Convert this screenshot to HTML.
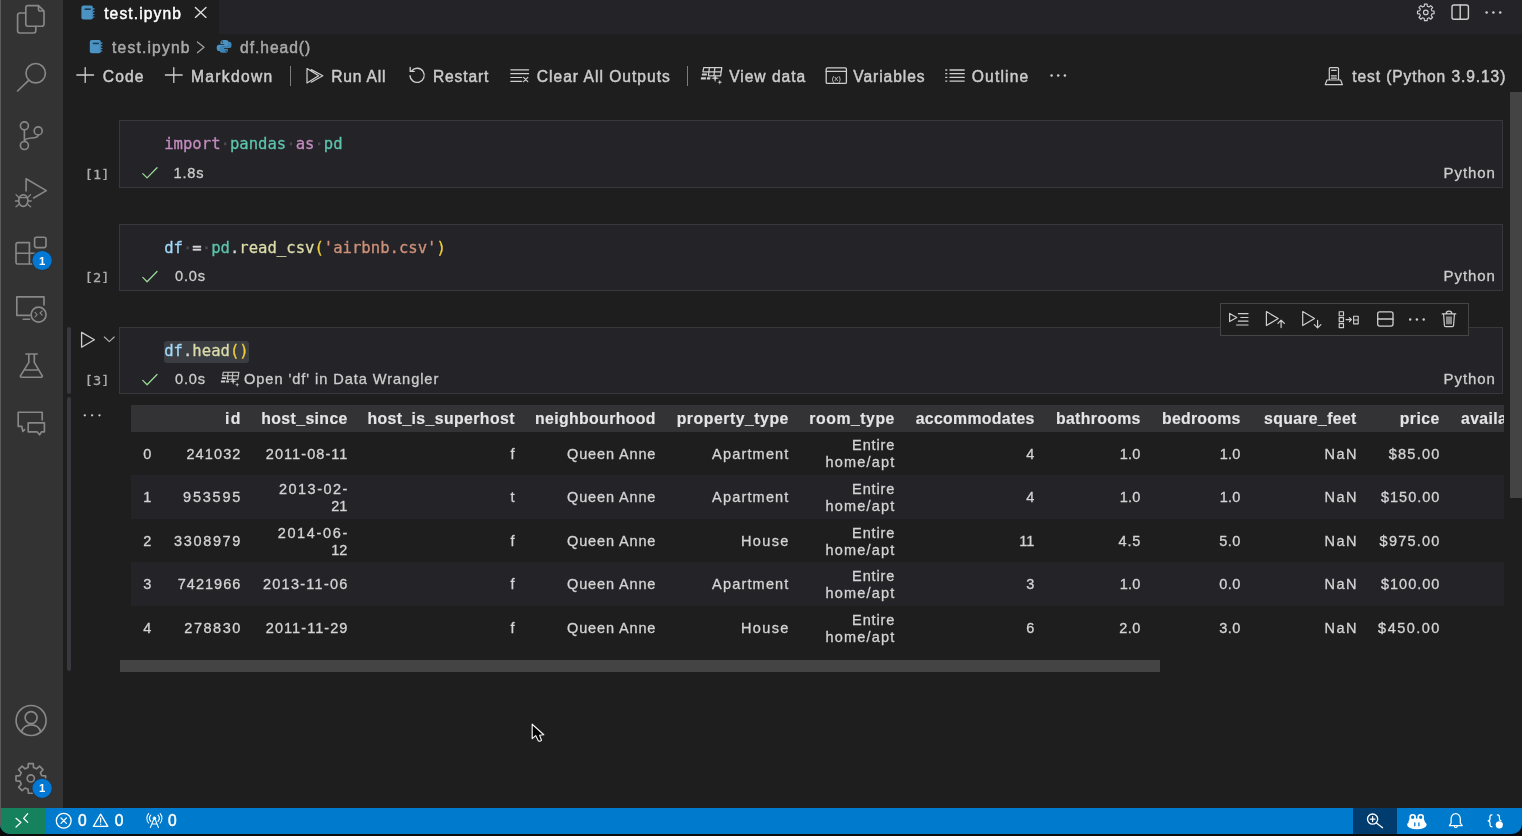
<!DOCTYPE html>
<html lang="en">
<head>
<meta charset="utf-8">
<title>test.ipynb</title>
<style>
*{box-sizing:border-box;margin:0;padding:0}
html,body{width:1522px;height:836px;overflow:hidden;background:#1e1e1e}
body{position:relative;font-family:"Liberation Sans",sans-serif;font-size:15.6px;color:#ccc;letter-spacing:.8px;-webkit-text-stroke:.45px currentColor}
.abs{position:absolute}
.t{position:absolute;white-space:pre;line-height:20px;height:20px}
.s{font-size:14.6px;-webkit-text-stroke:.3px currentColor}
svg{position:absolute;overflow:visible}
svg text{-webkit-text-stroke:0}
/* chrome */
#activity{left:0;top:0;width:63px;height:808px;background:#333}
#leftedge{left:0;top:0;width:1px;height:826px;background:#5c5c5c}
#tabs{left:63px;top:0;width:1459px;height:34px;background:#232328}
#tab1{left:63px;top:0;width:156px;height:34px;background:#1e1e1e}
#bottom{left:0;top:808px;width:1522px;height:28px;background:#0c0c0c}
#status{left:0;top:808px;width:1522px;height:26px;background:#007acc;border-radius:0 0 10px 10px}
#remote{left:0;top:808px;width:46px;height:26px;background:#16825d;border-radius:0 0 0 10px}
#zoomitem{left:1353px;top:808px;width:44px;height:26px;background:#003c6e}
/* cells */
.cell{position:absolute;left:119px;width:1384px;height:67px;background:#232328;border:1px solid #37373c}
.code{position:absolute;left:164.2px;font-family:"DejaVu Sans Mono","Liberation Mono",monospace;font-size:15.6px;letter-spacing:0;white-space:pre;line-height:22px;height:22px;-webkit-text-stroke:.3px currentColor}
.ws{color:#4b4b50}
.exec{font-family:"DejaVu Sans Mono","Liberation Mono",monospace;font-size:13.6px;letter-spacing:0;color:#acacac;-webkit-text-stroke:.3px currentColor;transform:scaleY(.84);transform-origin:50% 48%}
/* table */
#out{left:131px;top:405px;width:1373px;height:246px;overflow:hidden}
table{border-collapse:collapse;table-layout:fixed;width:1460.5px;font-size:14.5px;letter-spacing:0;color:#d4d4d4;-webkit-text-stroke:.3px currentColor}
th,td{text-align:right;padding:2.2px 8.6px 0 0;line-height:17px;vertical-align:middle;white-space:nowrap;overflow:visible}
th{font-weight:700;font-size:15.8px;height:26.7px;padding-top:1.2px;color:#e4e4e4;-webkit-text-stroke:.15px currentColor}
td{height:43.5px}
tbody tr:nth-child(1) td{height:43.2px}tbody tr:nth-child(2) td{height:44.3px}tbody tr:nth-child(3) td{height:42.6px}tbody tr:nth-child(4) td{height:44px}
tbody tr:nth-child(1) td.m{padding-bottom:1.4px}tbody tr:nth-child(2) td:not(.m){padding-top:.2px}
thead tr{background:#333336}
tbody tr:nth-child(even){background:#232328}
</style>
</head>
<body>
<div id="L" style="position:absolute;left:0;top:0;width:1522px;height:836px;will-change:transform">
<div class="abs" id="bottom"></div>
<div class="abs" id="activity"></div>
<div class="abs" id="tabs"></div>
<div class="abs" id="tab1"></div>
<div class="abs" id="status"></div>
<div class="abs" id="remote"></div>
<div class="abs" id="zoomitem"></div>
<div class="abs" id="leftedge"></div>

<!-- TAB -->
<div class="t" id="x_tab" style="left:104.2px;letter-spacing:1.1px;top:4px;color:#fff">test.ipynb</div>
<!-- BREADCRUMB -->
<div class="t" id="x_bc1" style="left:112.1px;letter-spacing:1.18px;top:38px;color:#aaa">test.ipynb</div>
<div class="t" id="x_bc2" style="left:240px;letter-spacing:.97px;top:38px;color:#aaa">df.head()</div>
<!-- TOOLBAR -->
<div class="t" id="x_code" style="left:102.8px;letter-spacing:1.1px;top:67px">Code</div>
<div class="t" id="x_md" style="left:191px;letter-spacing:1.32px;top:67px">Markdown</div>
<div class="t" id="x_run" style="left:331.2px;letter-spacing:0.82px;top:67px">Run All</div>
<div class="t" id="x_rst" style="left:432.9px;letter-spacing:0.88px;top:67px">Restart</div>
<div class="t" id="x_clr" style="left:536.8px;letter-spacing:1.0px;top:67px">Clear All Outputs</div>
<div class="t" id="x_vd" style="left:729.2px;letter-spacing:0.97px;top:67px">View data</div>
<div class="t" id="x_var" style="left:853.2px;letter-spacing:0.95px;top:67px">Variables</div>
<div class="t" id="x_out" style="left:971.8px;letter-spacing:1.17px;top:67px">Outline</div>
<div class="t" id="x_krn" style="left:1352.2px;letter-spacing:0.9px;top:67px">test (Python 3.9.13)</div>
<div class="abs" style="left:289.6px;top:66px;width:1.2px;height:20px;background:#7c7c7c"></div>
<div class="abs" style="left:687.2px;top:66px;width:1.2px;height:20px;background:#7c7c7c"></div>
<!-- CELLS -->
<div class="cell" style="top:120px;height:68px"></div>
<div class="cell" style="top:224px"></div>
<div class="cell" style="top:327px"></div>

<div class="code" style="top:132.8px"><span style="color:#c38cbe">import</span><span class="ws">·</span><span style="color:#5cc4ac">pandas</span><span class="ws">·</span><span style="color:#c38cbe">as</span><span class="ws">·</span><span style="color:#5cc4ac">pd</span></div>
<div class="code" style="top:237px"><span style="color:#a2d9f8">df</span><span class="ws">·</span><span style="color:#d4d4d4">=</span><span class="ws">·</span><span style="color:#5cc4ac">pd</span><span style="color:#d4d4d4">.</span><span style="color:#dcdcaa">read_csv</span><span style="color:#efce3a">(</span><span style="color:#ce9178">'airbnb.csv'</span><span style="color:#efce3a">)</span></div>
<div class="abs" style="left:164px;top:341px;width:84.5px;height:22px;background:#3a3d41;border-radius:3px"></div>
<div class="code" style="top:340px"><span style="color:#a2d9f8">df</span><span style="color:#d4d4d4">.</span><span style="color:#dcdcaa">head</span><span style="color:#efce3a">()</span></div>

<div class="t exec" style="left:84.8px;top:165px">[1]</div>
<div class="t exec" style="left:84.8px;top:268px">[2]</div>
<div class="t exec" style="left:84.8px;top:371px">[3]</div>

<div class="t s" id="x_t1" style="left:173.5px;top:163px">1.8s</div>
<div class="t s" id="x_t2" style="left:175px;top:266px">0.0s</div>
<div class="t s" id="x_t3" style="left:175px;top:369px">0.0s</div>
<div class="t s" id="x_dw" style="left:244px;letter-spacing:.94px;top:369px">Open 'df' in Data Wrangler</div>
<div class="t s" id="x_py1" style="left:1443.5px;font-size:15px;letter-spacing:.95px;top:163px">Python</div>
<div class="t s" id="x_py2" style="left:1443.5px;font-size:15px;letter-spacing:.95px;top:266px">Python</div>
<div class="t s" id="x_py3" style="left:1443.5px;font-size:15px;letter-spacing:.95px;top:369px">Python</div>

<!-- focus bars -->
<div class="abs" style="left:67px;top:327px;width:3.8px;height:67px;background:#38383e;border-radius:2px"></div>
<div class="abs" style="left:67px;top:397px;width:3.8px;height:274px;background:#38383e;border-radius:2px"></div>
<!-- cell toolbar -->
<div class="abs" style="left:1220px;top:303px;width:249px;height:32.5px;background:#1e1e1e;border:1px solid #454545"></div>
<!-- OUTPUT TABLE -->
<div class="abs" id="out">
<table>
<colgroup><col style="width:29px"><col style="width:89px"><col style="width:107px"><col style="width:167px"><col style="width:141px"><col style="width:133px"><col style="width:106px"><col style="width:140px"><col style="width:106px"><col style="width:100px"><col style="width:116px"><col style="width:83px"><col style="width:143.5px"></colgroup>
<thead><tr><th></th><th><span style="letter-spacing:1.3px;margin-right:-1.30px">id</span></th><th><span style="letter-spacing:0.4px;margin-right:-0.40px">host_since</span></th><th><span style="letter-spacing:0.41px;margin-right:-0.41px">host_is_superhost</span></th><th><span style="letter-spacing:0.38px;margin-right:-0.38px">neighbourhood</span></th><th><span style="letter-spacing:0.53px;margin-right:-0.53px">property_type</span></th><th><span style="letter-spacing:0.54px;margin-right:-0.54px">room_type</span></th><th><span style="letter-spacing:0.33px;margin-right:-0.33px">accommodates</span></th><th><span style="letter-spacing:0.36px;margin-right:-0.36px">bathrooms</span></th><th><span style="letter-spacing:0.3px;margin-right:-0.30px">bedrooms</span></th><th><span style="letter-spacing:0.37px;margin-right:-0.37px">square_feet</span></th><th><span style="letter-spacing:0.48px;margin-right:-0.48px">price</span></th><th><span style="letter-spacing:0.4px;margin-right:-0.40px">availability_365</span></th></tr></thead>
<tbody>
<tr><td><span style="letter-spacing:0px;margin-right:0.00px">0</span></td><td><span style="letter-spacing:1.12px;margin-right:-1.12px">241032</span></td><td><span style="letter-spacing:1.06px;margin-right:-1.06px">2011-08-11</span></td><td><span style="letter-spacing:0px;margin-right:0.00px">f</span></td><td><span style="letter-spacing:0.86px;margin-right:-0.86px">Queen Anne</span></td><td><span style="letter-spacing:1.18px;margin-right:-1.18px">Apartment</span></td><td class="m"><span style="letter-spacing:0.88px;margin-right:-0.88px">Entire</span><br><span style="letter-spacing:1.21px;margin-right:-1.21px">home/apt</span></td><td><span style="letter-spacing:0px;margin-right:0.00px">4</span></td><td><span style="letter-spacing:0.3px;margin-right:-0.30px">1.0</span></td><td><span style="letter-spacing:0.3px;margin-right:-0.30px">1.0</span></td><td><span style="letter-spacing:1.43px;margin-right:-1.43px">NaN</span></td><td><span style="letter-spacing:1.28px;margin-right:-1.28px">$85.00</span></td><td></td></tr>
<tr><td><span style="letter-spacing:0px;margin-right:0.00px">1</span></td><td><span style="letter-spacing:1.8px;margin-right:-1.80px">953595</span></td><td class="m"><span style="letter-spacing:1.48px;margin-right:-1.48px">2013-02-</span><br><span style="letter-spacing:0px;margin-right:0.00px">21</span></td><td><span style="letter-spacing:0px;margin-right:0.00px">t</span></td><td><span style="letter-spacing:0.86px;margin-right:-0.86px">Queen Anne</span></td><td><span style="letter-spacing:1.18px;margin-right:-1.18px">Apartment</span></td><td class="m"><span style="letter-spacing:0.88px;margin-right:-0.88px">Entire</span><br><span style="letter-spacing:1.21px;margin-right:-1.21px">home/apt</span></td><td><span style="letter-spacing:0px;margin-right:0.00px">4</span></td><td><span style="letter-spacing:0.3px;margin-right:-0.30px">1.0</span></td><td><span style="letter-spacing:0.3px;margin-right:-0.30px">1.0</span></td><td><span style="letter-spacing:1.43px;margin-right:-1.43px">NaN</span></td><td><span style="letter-spacing:1.01px;margin-right:-1.01px">$150.00</span></td><td></td></tr>
<tr><td><span style="letter-spacing:0px;margin-right:0.00px">2</span></td><td><span style="letter-spacing:1.64px;margin-right:-1.64px">3308979</span></td><td class="m"><span style="letter-spacing:1.67px;margin-right:-1.67px">2014-06-</span><br><span style="letter-spacing:0px;margin-right:0.00px">12</span></td><td><span style="letter-spacing:0px;margin-right:0.00px">f</span></td><td><span style="letter-spacing:0.86px;margin-right:-0.86px">Queen Anne</span></td><td><span style="letter-spacing:1.39px;margin-right:-1.39px">House</span></td><td class="m"><span style="letter-spacing:0.88px;margin-right:-0.88px">Entire</span><br><span style="letter-spacing:1.21px;margin-right:-1.21px">home/apt</span></td><td><span style="letter-spacing:0px;margin-right:0.00px">11</span></td><td><span style="letter-spacing:0.85px;margin-right:-0.85px">4.5</span></td><td><span style="letter-spacing:0.55px;margin-right:-0.55px">5.0</span></td><td><span style="letter-spacing:1.43px;margin-right:-1.43px">NaN</span></td><td><span style="letter-spacing:1.23px;margin-right:-1.23px">$975.00</span></td><td></td></tr>
<tr><td><span style="letter-spacing:0px;margin-right:0.00px">3</span></td><td><span style="letter-spacing:1.04px;margin-right:-1.04px">7421966</span></td><td><span style="letter-spacing:1.26px;margin-right:-1.26px">2013-11-06</span></td><td><span style="letter-spacing:0px;margin-right:0.00px">f</span></td><td><span style="letter-spacing:0.86px;margin-right:-0.86px">Queen Anne</span></td><td><span style="letter-spacing:1.18px;margin-right:-1.18px">Apartment</span></td><td class="m"><span style="letter-spacing:0.88px;margin-right:-0.88px">Entire</span><br><span style="letter-spacing:1.21px;margin-right:-1.21px">home/apt</span></td><td><span style="letter-spacing:0px;margin-right:0.00px">3</span></td><td><span style="letter-spacing:0.3px;margin-right:-0.30px">1.0</span></td><td><span style="letter-spacing:0.55px;margin-right:-0.55px">0.0</span></td><td><span style="letter-spacing:1.43px;margin-right:-1.43px">NaN</span></td><td><span style="letter-spacing:1.01px;margin-right:-1.01px">$100.00</span></td><td></td></tr>
<tr><td><span style="letter-spacing:0px;margin-right:0.00px">4</span></td><td><span style="letter-spacing:1.54px;margin-right:-1.54px">278830</span></td><td><span style="letter-spacing:1.06px;margin-right:-1.06px">2011-11-29</span></td><td><span style="letter-spacing:0px;margin-right:0.00px">f</span></td><td><span style="letter-spacing:0.86px;margin-right:-0.86px">Queen Anne</span></td><td><span style="letter-spacing:1.39px;margin-right:-1.39px">House</span></td><td class="m"><span style="letter-spacing:0.88px;margin-right:-0.88px">Entire</span><br><span style="letter-spacing:1.21px;margin-right:-1.21px">home/apt</span></td><td><span style="letter-spacing:0px;margin-right:0.00px">6</span></td><td><span style="letter-spacing:0.55px;margin-right:-0.55px">2.0</span></td><td><span style="letter-spacing:0.55px;margin-right:-0.55px">3.0</span></td><td><span style="letter-spacing:1.43px;margin-right:-1.43px">NaN</span></td><td><span style="letter-spacing:1.48px;margin-right:-1.48px">$450.00</span></td><td></td></tr>
</tbody></table>
</div>

<!-- scrollbars -->
<div class="abs" style="left:120px;top:660px;width:1040px;height:12px;background:#444"></div>
<div class="abs" style="left:1510px;top:92px;width:12px;height:406px;background:#444"></div>

<!-- STATUS -->
<div class="t" style="left:78px;top:810.5px;color:#fff">0</div>
<div class="t" style="left:114.8px;top:810.5px;color:#fff">0</div>
<div class="t" style="left:168px;top:810.5px;color:#fff">0</div>
</div><!-- /L -->
<svg id="icons" width="1522" height="836" viewBox="0 0 1522 836" style="left:0;top:0" fill="none" stroke-linecap="round" stroke-linejoin="round">
<!-- ACTIVITY BAR -->
<g stroke="#888" stroke-width="1.65">
<!-- files -->
<path d="M38.5 5.6 H28 a2.2 2.2 0 0 0 -2.2 2.2 V24 a2.2 2.2 0 0 0 2.2 2.2 H41.8 a2.2 2.2 0 0 0 2.2 -2.2 V11 Z M38.5 5.8 V9.6 a1.4 1.4 0 0 0 1.4 1.4 H43.8"/>
<path d="M25.6 13 H19.8 a2.2 2.2 0 0 0 -2.2 2.2 V30.8 a2.2 2.2 0 0 0 2.2 2.2 H33.6 a2.2 2.2 0 0 0 2.2 -2.2 V26.4"/>
<!-- search -->
<circle cx="35.7" cy="73.2" r="9.7"/><path d="M28.9 80.2 L17.6 91"/>
<!-- source control -->
<circle cx="24.4" cy="125.8" r="4"/><circle cx="38.2" cy="130.9" r="4"/><circle cx="24.4" cy="145.5" r="4"/>
<path d="M24.4 129.8 V141.5 M38.2 134.9 C38.2 140.5 25 135.5 24.4 141.5"/>
<!-- debug -->
<path d="M26.1 191 V178.8 L46.3 190.6 L33.6 198"/>
<ellipse cx="23.3" cy="200.6" rx="4.6" ry="5.8"/>
<path d="M19 197.6 H27.6 M18.4 197 L16 194.6 M28.2 197 L30.6 194.6 M18.6 201 H15.4 M28 201 H31.2 M18.8 204.4 L16 206.8 M27.8 204.4 L30.6 206.8" stroke-width="1.3"/>
<!-- extensions -->
<rect x="34.6" y="237.2" width="11.4" height="10.4" rx="2"/>
<path d="M29.4 242.6 H18 a2 2 0 0 0 -2 2 V262 a2 2 0 0 0 2 2 H39.6 a2 2 0 0 0 2 -2 V255.2 a2 2 0 0 0 -2 -2 H16 M29.4 242.6 V264"/>
<!-- remote explorer -->
<path d="M44 305 V296.8 H16.8 V315.4 H30 M23.2 319.2 H29.6"/>
<circle cx="38.6" cy="314.6" r="7.5"/>
<path d="M35 312.4 L37.2 314.6 L35 316.8 M42.2 310.8 L40 313 L42.2 315.2" stroke-width="1.1"/>
<!-- beaker -->
<path d="M25.9 354 H37.2 M28.8 354 V362.4 L20.6 375.6 a1 1 0 0 0 .9 1.6 H41.2 a1 1 0 0 0 .9 -1.6 L34.3 362.4 V354 M24.6 370 H38.4"/>
<!-- chat -->
<path d="M42.2 420 V412.2 H18.2 V426.4 H21.8 L22.8 431.4 L24.6 429.6"/>
<path d="M28.2 422.8 H44.4 V431.8 H41.6 L39.6 434.8 L37 431.8 H28.2 Z"/>
<!-- account -->
<circle cx="31.1" cy="720.5" r="15"/><circle cx="31.1" cy="717.6" r="6"/>
<path d="M21.6 732 C23 722.4 39.2 722.4 40.6 732"/>
<!-- gear -->
<path d="M28.10 767.53 L28.34 763.60 L33.26 763.60 L33.50 767.53 L36.58 768.80 L39.52 766.20 L43.00 769.68 L40.40 772.62 L41.67 775.70 L45.60 775.94 L45.60 780.86 L41.67 781.10 L40.40 784.18 L43.00 787.12 L39.52 790.60 L36.58 788.00 L33.50 789.27 L33.26 793.20 L28.34 793.20 L28.10 789.27 L25.02 788.00 L22.08 790.60 L18.60 787.12 L21.20 784.18 L19.93 781.10 L16.00 780.86 L16.00 775.94 L19.93 775.70 L21.20 772.62 L18.60 769.68 L22.08 766.20 L25.02 768.80Z"/>
<circle cx="30.8" cy="778.4" r="3.6"/>
</g>
<!-- badges -->
<g stroke="none">
<circle cx="42.1" cy="260.5" r="10.6" fill="#2b3440"/><circle cx="42.1" cy="260.5" r="9.6" fill="#0078d4"/>
<circle cx="42.1" cy="788.3" r="10.6" fill="#2b3440"/><circle cx="42.1" cy="788.3" r="9.6" fill="#0078d4"/>
<text x="42.1" y="264.6" font-family="Liberation Sans, sans-serif" font-weight="700" font-size="11.4" fill="#fff" text-anchor="middle" letter-spacing="0">1</text>
<text x="42.1" y="792.4" font-family="Liberation Sans, sans-serif" font-weight="700" font-size="11.4" fill="#fff" text-anchor="middle" letter-spacing="0">1</text>
</g>
</svg>
<svg width="1522" height="836" viewBox="0 0 1522 836" style="left:0;top:0" fill="none" stroke-linecap="round" stroke-linejoin="round">
<!-- tab + breadcrumb notebook icons -->
<g transform="translate(81.4 5.6)"><rect x="0" y="0" width="11.6" height="13.8" rx="2.2" fill="#4b93c3" stroke="none"/><rect x="3.2" y="2.8" width="6.2" height="1.6" fill="#1c3a52" stroke="none"/><path d="M12.4 3.2v.1M12.4 6v.1M12.4 8.8v.1M12.4 11.4v.1" stroke="#4b93c3" stroke-width="1.5"/><path d="M10.9 2.2V11.8" stroke="#2f6f9c" stroke-width=".7" stroke-dasharray="1.2 1.5"/></g>
<g transform="translate(89.8 40) scale(.96)"><rect x="0" y="0" width="11.6" height="13.8" rx="2.2" fill="#4b93c3" stroke="none"/><rect x="3.2" y="2.8" width="6.2" height="1.6" fill="#1c3a52" stroke="none"/><path d="M12.4 3.2v.1M12.4 6v.1M12.4 8.8v.1M12.4 11.4v.1" stroke="#4b93c3" stroke-width="1.5"/><path d="M10.9 2.2V11.8" stroke="#2f6f9c" stroke-width=".7" stroke-dasharray="1.2 1.5"/></g>
<!-- close x -->
<path d="M195.4 7.4L206 17.4M206 7.4L195.4 17.4" stroke="#e0e0e0" stroke-width="1.35"/>
<!-- breadcrumb chevron -->
<path d="M197.4 42L204 47.3L197.4 52.7" stroke="#a0a0a0" stroke-width="1.3"/>
<!-- python logo -->
<g stroke="none">
<path d="M223.9 40c-2.6 0-3.4 1.1-3.4 2.4v1.7h3.7v.6h-5.2c-1.5 0-2.3 1.2-2.3 3.2 0 2 .9 3.1 2.3 3.1h1.3v-1.9c0-1.5 1.2-2.6 2.7-2.6h3.6c1.2 0 2.100-1 2.100-2.200v-2c0-1.300-1.200-2.300-2.700-2.300zM222.300 41.200a.7.7 0 1 1 0 1.400a.7.7 0 0 1 0-1.400z" fill="#4b93c3"/>
<path d="M224.400 52.800c2.600 0 3.400-1.100 3.400-2.400v-1.700h-3.700v-.6h5.200c1.500 0 2.300-1.200 2.300-3.200 0-2-.9-3.100-2.300-3.100h-1.300v1.900c0 1.500-1.200 2.600-2.700 2.600h-3.600c-1.200 0-2.100 1-2.100 2.200v2c0 1.300 1.200 2.300 2.700 2.300zM226 51.600a.7.7 0 1 1 0-1.400a.7.7 0 0 1 0 1.400z" fill="#3f84b5"/>
</g>
<g stroke="#cfcfcf" stroke-width="1.3" color="#cfcfcf">
<!-- + Code, + Markdown -->
<path d="M76.800 75H93.600M85.200 67.600V82.400M165.400 75H182.200M173.800 67.600V82.400"/>
<!-- run all -->
<path d="M307 68.600V83L318.600 75.800ZM311.200 69.600L322.800 75.800L311.200 82.200" stroke-width="1.2"/>
<!-- restart -->
<path d="M411.800 70.600A7.100 7.100 0 1 1 410 75.600M410.200 67.400V71.400H414.200"/>
<!-- clear all -->
<path d="M510.800 69.800H528.600M510.800 73.700H528.600M510.800 77.500H521.800M510.800 81.300H521.800M523.600 77.400L527.800 81.600M527.800 77.400L523.600 81.600" stroke-width="1.200"/>
<!-- view data -->
<g transform="translate(696 67.6)"><path d="M7.7 0H25.8L24.6 8.2H12.4L12.9 4.2H6.9ZM13.4 0L12.9 4.2H25.2M18.9 0L17.9 8.2" stroke-width="1.25"/><path d="M6 6H11L10.8 7.9H5.8ZM5 9.7H10L9.8 11.9H4.8ZM11 9.7H14.4L14.2 11.9H10.8Z" fill="currentColor" stroke="none"/><path d="M19.1 6.6L20 9.7L23.1 10.6L20 11.5L19.1 14.6L18.2 11.5L15.100000000000001 10.6L18.2 9.7ZM23.8 12.1L24.4 14L26.3 14.6L24.4 15.2L23.8 17.1L23.2 15.2L21.3 14.6L23.2 14Z" fill="currentColor" stroke="none"/></g>
<!-- variables -->
<rect x="826.200" y="67.800" width="20.200" height="15.600" rx="1.200"/><path d="M826.200 71.400H846.400"/>
<!-- outline -->
<path d="M950 70H964.200M950 73.700H964.200M950 77.400H964.200M950 81.100H964.200M945.800 70h1M945.800 73.700h1M945.800 77.400h1M945.800 81.100h1" stroke-width="1.300"/>
<!-- kernel server -->
<path d="M1329.300 80V68.600a1 1 0 0 1 1-1h7.200a1 1 0 0 1 1 1V80M1331.600 70.400H1336.200M1331.400 75.800H1336.400M1331.400 78.200H1336.400M1327 80H1340.600L1342.400 84.600H1325.200Z" stroke-width="1.200"/>
<!-- top right: gear, split, more -->
<path d="M1424.280 6.290 L1424.420 4.110 L1427.180 4.110 L1427.320 6.290 L1429.050 7 L1430.680 5.570 L1432.630 7.520 L1431.200 9.150 L1431.910 10.880 L1434.090 11.020 L1434.090 13.780 L1431.910 13.920 L1431.200 15.650 L1432.630 17.280 L1430.680 19.230 L1429.050 17.800 L1427.320 18.510 L1427.180 20.690 L1424.420 20.690 L1424.280 18.510 L1422.550 17.800 L1420.920 19.230 L1418.970 17.280 L1420.400 15.650 L1419.690 13.920 L1417.510 13.780 L1417.510 11.020 L1419.690 10.880 L1420.400 9.150 L1418.970 7.520 L1420.920 5.570 L1422.550 7Z" stroke-width="1.150"/>
<circle cx="1425.800" cy="12.400" r="2.300" stroke-width="1.150"/>
<rect x="1452" y="5" width="16.400" height="14.200" rx="2" stroke-width="1.400"/><path d="M1460.200 5V19.200" stroke-width="1.400"/>
</g>
<g fill="#cfcfcf" stroke="none">
<circle cx="1051.600" cy="75.400" r="1.250"/><circle cx="1058.200" cy="75.400" r="1.250"/><circle cx="1064.900" cy="75.400" r="1.250"/>
<circle cx="1486.600" cy="12.400" r="1.250"/><circle cx="1493.400" cy="12.400" r="1.250"/><circle cx="1500.200" cy="12.400" r="1.250"/>
<text x="836.300" y="80.600" font-family="Liberation Sans, sans-serif" font-size="8" text-anchor="middle" letter-spacing="0">(x)</text>
</g>
</svg>
<svg width="1522" height="836" viewBox="0 0 1522 836" style="left:0;top:0" fill="none" stroke-linecap="round" stroke-linejoin="round">
<!-- check marks -->
<g stroke="#9ad896" stroke-width="1.300">
<path d="M142.800 173.600L147.100 177.900L157 167.700"/>
<path d="M142.800 277.400L147.100 281.700L157 271.500"/>
<path d="M142.800 380.400L147.100 384.700L157 374.500"/>
</g>
<g stroke="#cfcfcf" stroke-width="1.300" color="#cfcfcf">
<!-- run + chevron -->
<path d="M81.600 332.400V347.200L94.400 339.800Z"/>
<path d="M104.400 337L109.300 341.600L114.200 337" stroke-width="1.150" stroke="#b0b0b0"/>
<!-- data wrangler small -->
<g transform="translate(216.700 372.200) scale(.86)"><path d="M7.7 0H25.8L24.6 8.2H12.4L12.9 4.2H6.9ZM13.4 0L12.9 4.2H25.2M18.9 0L17.9 8.2" stroke-width="1.25"/><path d="M6 6H11L10.8 7.9H5.8ZM5 9.7H10L9.8 11.9H4.8ZM11 9.7H14.4L14.2 11.9H10.8Z" fill="currentColor" stroke="none"/><path d="M19.1 6.6L20 9.7L23.1 10.6L20 11.5L19.1 14.6L18.2 11.5L15.100000000000001 10.6L18.2 9.7ZM23.8 12.1L24.4 14L26.3 14.6L24.4 15.2L23.8 17.1L23.2 15.2L21.3 14.6L23.2 14Z" fill="currentColor" stroke="none"/></g>
<!-- cell toolbar: run by line -->
<path d="M1229.600 313.400V321.600L1236.800 317.500ZM1238.400 313.700H1248M1240.800 317.500H1248M1238.400 321.200H1248M1236.600 325H1248" stroke-width="1.200"/>
<!-- run above -->
<path d="M1266.400 311.600V325.600L1278.200 318.600ZM1281.100 327.600V320.600M1277.900 323.400L1281.100 320.200L1284.400 323.400" stroke-width="1.200"/>
<!-- run below -->
<path d="M1302.700 311.600V325.600L1314.500 318.600ZM1317.600 320.400V327.600M1314.300 324.600L1317.600 327.900L1320.900 324.600" stroke-width="1.200"/>
<!-- split cell -->
<path d="M1339.200 311.700h4.300v4h-4.300zM1339.200 317.600h4.300v4h-4.300zM1339.200 323.600h4.300v4h-4.300zM1346 319.600H1351.200M1349.400 317.600L1351.400 319.600L1349.400 321.600M1353.600 316.200h4.600v7.600h-4.600zM1353.600 320H1358.200" stroke-width="1.150"/>
<!-- split vertical box -->
<rect x="1377.700" y="311.800" width="15.300" height="14.300" rx="2" stroke-width="1.300"/><path d="M1377.700 319H1393"/>
<!-- trash -->
<path d="M1442.200 313.900H1455.800M1446.200 313.700a2.800 2.600 0 0 1 5.600 0M1443.600 314.200L1444.400 325.400a1.300 1.300 0 0 0 1.300 1.200H1452.300a1.300 1.300 0 0 0 1.300-1.200L1454.400 314.200M1447 316.800V323.800M1449 316.800V323.800M1451 316.800V323.800" stroke-width="1.200"/>
</g>
<g fill="#cfcfcf" stroke="none">
<circle cx="1410.200" cy="319.500" r="1.200"/><circle cx="1416.900" cy="319.500" r="1.200"/><circle cx="1423.700" cy="319.500" r="1.200"/>
<circle cx="84.800" cy="415.300" r="1.150"/><circle cx="92.100" cy="415.300" r="1.150"/><circle cx="99.500" cy="415.300" r="1.150"/>
</g>
</svg>
<svg width="1522" height="836" viewBox="0 0 1522 836" style="left:0;top:0" fill="none" stroke="#fff" stroke-width="1.300" stroke-linecap="round" stroke-linejoin="round">
<!-- remote -->
<path d="M16 818.300L21 822.400L16 827M27.700 813.700L23.600 818.300L27.700 822.400" stroke-width="1.250"/>
<!-- errors -->
<circle cx="63.700" cy="820.700" r="7.400"/><path d="M61 818L66.400 823.400M66.400 818L61 823.400" stroke-width="1.200"/>
<!-- warnings -->
<path d="M100.600 814.200L107.800 826.400H93.400Z"/><path d="M100.600 818.200V822.200M100.600 824.100V824.300" stroke-width="1.200"/>
<!-- broadcast -->
<path d="M154.400 817.600L150.400 827.400M154.400 817.600L158.400 827.400M151.900 824H156.900M150.800 815.200a4.600 4.600 0 0 0 0 6.200M158 815.200a4.600 4.600 0 0 1 0 6.200M148.600 813.600a7.400 7.400 0 0 0 0 9.400M160.200 813.600a7.400 7.400 0 0 1 0 9.400" stroke-width="1.150"/>
<circle cx="154.400" cy="818.200" r="1.300" stroke-width="1"/>
<!-- zoom -->
<circle cx="1372.600" cy="819.100" r="5.100"/><path d="M1376.400 823L1382.600 827.700M1370.200 819.100H1375M1372.600 816.700V821.500"/>
<!-- copilot -->
<ellipse cx="1416.900" cy="824.700" rx="9.800" ry="4.500" fill="#fff" stroke="none"/>
<path d="M1408.200 822.500L1409.700 818.500H1423.600L1425.200 822.500Z" fill="#fff" stroke="none"/>
<circle cx="1412.700" cy="817.300" r="2.500" stroke-width="1.600" fill="#007acc"/><circle cx="1420.700" cy="817.300" r="2.500" stroke-width="1.600" fill="#007acc"/>
<path d="M1414.800 822.800V825.800M1418.900 822.800V825.800" stroke="#007acc" stroke-width="1.300"/>
<!-- bell -->
<path d="M1449.400 825.700H1462.200L1460.300 823V819a4.600 5.400 0 0 0 -9.200 0V823ZM1454.300 826a1.500 1.500 0 0 0 3 0" stroke-width="1.250"/>
<!-- braces with dot -->
<path d="M1492 814.800c-2.400 0-2 2-2 3.600 0 1.600-.6 2.300-1.900 2.400 1.300.1 1.900.8 1.900 2.400 0 1.600-.4 3.600 2 3.600M1497.400 814.800c2.400 0 2 2 2 3.600 0 1.200.4 2 1.500 2.300" stroke-width="1.250"/>
<circle cx="1499.300" cy="824.800" r="3.600" fill="#fff" stroke="none"/>
</svg>
<svg width="1522" height="836" viewBox="0 0 1522 836" style="left:0;top:0">
<path d="M532.200 724.200V738.600L535.700 735.600L538.300 740.700Q540 741.700 541.500 740.300L539.600 735.200L543.800 734.700Z" fill="#000" stroke="#f4f4f4" stroke-width="1.150" stroke-linejoin="round"/>
</svg>
</body>
</html>
